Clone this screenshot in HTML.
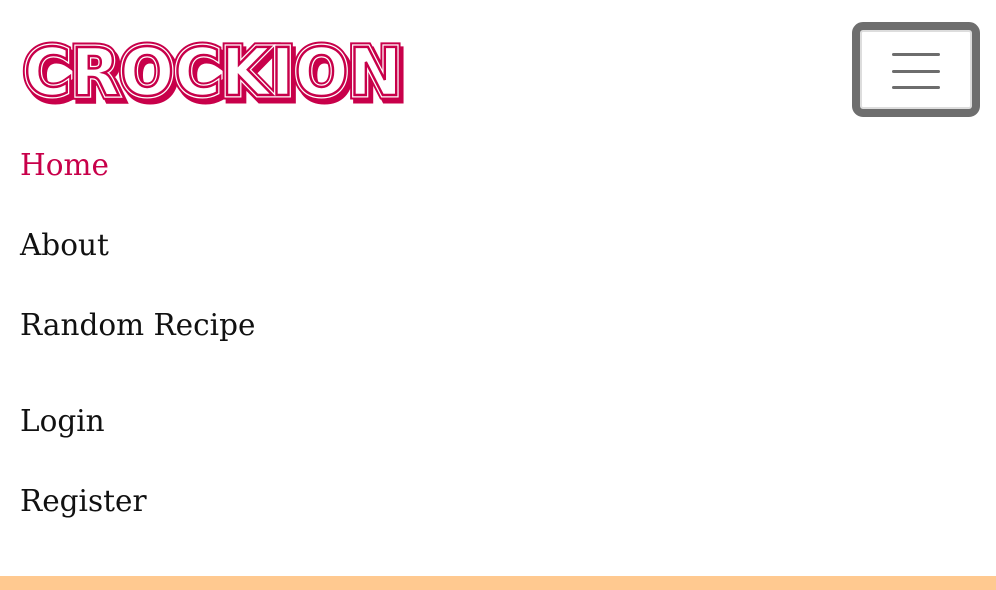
<!DOCTYPE html>
<html><head><style>
body{margin:0;width:996px;height:590px;background:#fff;position:relative;overflow:hidden;font-family:"DejaVu Serif","Liberation Serif",serif;}
.n{position:absolute;left:20px;font-size:29.5px;line-height:1;color:#111;}
.btn{position:absolute;left:852px;top:22px;width:112px;height:79px;border:8px solid #6e6e6e;border-radius:11px;background:#fff;box-shadow:inset 0 0 0 2px #ddd;}
.l{position:absolute;left:32px;width:48px;height:3px;background:#6d6d6d;border-radius:2px;}
.bar{position:absolute;left:0;top:576px;width:996px;height:14px;background:#ffc990;}
</style></head><body>
<svg style="position:absolute;left:0;top:0" width="430" height="120">
<g font-family="DejaVu Sans, Liberation Sans, sans-serif" font-weight="bold" font-size="66" stroke-linejoin="miter">
<text x="27" y="99" textLength="378" lengthAdjust="spacingAndGlyphs" fill="#c8004a" stroke="#c8004a" stroke-width="9">CROCKION</text>
<text x="24" y="95" textLength="378" lengthAdjust="spacingAndGlyphs" fill="#c8004a" stroke="#c8004a" stroke-width="9">CROCKION</text>
<text x="24" y="95" textLength="378" lengthAdjust="spacingAndGlyphs" fill="#fff" stroke="#fff" stroke-width="5">CROCKION</text>
<text x="24" y="95" textLength="378" lengthAdjust="spacingAndGlyphs" fill="#fff" stroke="#c8004a" stroke-width="2.5">CROCKION</text>
</g></svg>
<div class="btn"><div class="l" style="top:23px"></div><div class="l" style="top:40px"></div><div class="l" style="top:56px"></div></div>
<div class="n" style="top:151px;color:#c8004a">Home</div>
<div class="n" style="top:231px">About</div>
<div class="n" style="top:311px">Random Recipe</div>
<div class="n" style="top:407px">Login</div>
<div class="n" style="top:487px">Register</div>
<div class="bar"></div>
</body></html>
